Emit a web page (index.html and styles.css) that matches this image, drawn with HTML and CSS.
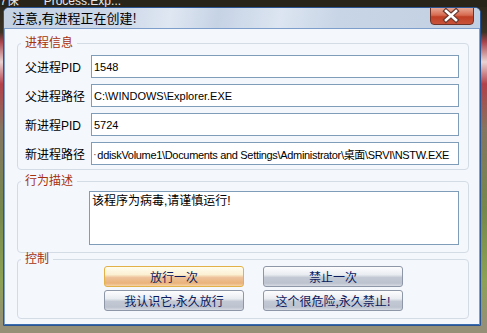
FILE: index.html
```
<!DOCTYPE html>
<html lang="zh-CN">
<head>
    <meta charset="UTF-8">
    <title>注意,有进程正在创建!</title>
    <link rel="stylesheet" href="styles.css">
</head>
<body>
    <div class="desk-top">
        <span class="desk-label">7保</span>
        <span class="desk-label desk-label-wide">Process.Exp...</span>
    </div>
    <div class="window">
        <div class="title-bar">
            <span class="title-text">注意,有进程正在创建!</span>
            <div class="close-btn">
                <svg width="42" height="17" viewBox="0 0 42 17">
                    <path d="M16 4 L26 13 M26 4 L16 13" stroke="#6b3a30" stroke-width="5" stroke-linecap="square" />
                    <path d="M16 4 L26 13 M26 4 L16 13" stroke="#ffffff" stroke-width="2.6" stroke-linecap="square" />
                </svg>
            </div>
        </div>
        <div class="client">
            <fieldset class="group group-info">
                <legend>进程信息</legend>
                <div class="row">
                    <span class="label">父进程PID</span>
                    <div class="field">1548</div>
                </div>
                <div class="row">
                    <span class="label">父进程路径</span>
                    <div class="field">C:\WINDOWS\Explorer.EXE</div>
                </div>
                <div class="row">
                    <span class="label">新进程PID</span>
                    <div class="field">5724</div>
                </div>
                <div class="row">
                    <span class="label">新进程路径</span>
                    <div class="field field-long"><span class="cut-mark">·</span>ddiskVolume1\Documents and Settings\Administrator\桌面\SRVI\NSTW.EXE</div>
                </div>
            </fieldset>
            <fieldset class="group group-desc">
                <legend>行为描述</legend>
                <div class="memo">该程序为病毒,请谨慎运行!</div>
            </fieldset>
            <fieldset class="group group-ctrl">
                <legend>控制</legend>
                <div class="buttons">
                    <button class="btn btn-default">放行一次</button>
                    <button class="btn">禁止一次</button>
                    <button class="btn">我认识它,永久放行</button>
                    <button class="btn">这个很危险,永久禁止!</button>
                </div>
            </fieldset>
        </div>
    </div>
</body>
</html>
```
FILE: styles.css
```
body {
    margin: 0;
    width: 487px;
    height: 333px;
    overflow: hidden;
    font-family: "Liberation Sans", "Noto Sans CJK SC", sans-serif;
    font-size: 12px;
    background: linear-gradient(to bottom, #2a2419 0, #3b3324 32px, #a9454c 42px, #ead2d2 62px, #b4414a 84px, #847660 130px, #76884c 210px, #8da254 280px, #968f78 326px);
}
.desk-top {
    height: 7px;
    overflow: hidden;
    background: #29241a;
    color: #e6e6e6;
    display: flex;
    line-height: 12px;
}
.desk-label {
    margin-top: -5px;
}
.desk-label-wide {
    margin-left: 25px;
}
.window {
    width: 476px;
    height: 317px;
    margin-left: 3px;
    border: 1px solid #2a5592;
    border-radius: 6px 6px 0 0;
    overflow: hidden;
    display: flex;
    flex-direction: column;
    background: #f4f7fc;
}
.title-bar {
    height: 20px;
    display: flex;
    justify-content: space-between;
    align-items: flex-start;
    background: linear-gradient(100deg, #c4d1e3 0%, #cdd8e8 25%, #dfe7f2 35%, #c6d3e5 45%, #dce5f1 58%, #c8d5e6 70%, #c2d0e3 100%);
}
.title-text {
    margin-left: 8px;
    line-height: 20px;
    font-size: 13px;
    color: #000;
    font-family: "Noto Sans CJK SC", sans-serif;
}
.close-btn {
    width: 42px;
    height: 16px;
    margin-top: -1px;
    margin-right: 6px;
    border: 1px solid #6d3328;
    border-radius: 0 0 4px 4px;
    background: linear-gradient(to bottom, #e9a996 0, #d66a50 45%, #bf3f24 55%, #c8533a 100%);
    display: flex;
}
.close-btn svg {
    margin: -1px 0 0 -1px;
}
.client {
    flex: 1;
    border: 1px solid #7d9ecb;
    border-bottom-color: #3a6db0;
    padding: 0 10px 0 12px;
    display: flex;
    flex-direction: column;
}
.group {
    margin: 0;
    border: 1px solid #d3dbe5;
    border-radius: 4px;
    padding: 0 9px 4px 3px;
    min-width: 0;
}
.group legend {
    padding: 0 4px;
    line-height: 12px;
    font-size: 12px;
    color: #a6310e;
}
.group-info {
    margin-top: 8px;
    padding-top: 6px;
    display: flex;
    flex-direction: column;
    gap: 6px;
}
.group-desc {
    margin-top: 5px;
    padding-top: 4px;
    padding-bottom: 7px;
}
.group-ctrl {
    padding-top: 1px;
    padding-bottom: 7px;
}
.row {
    display: grid;
    grid-template-columns: 66px 1fr;
    align-items: center;
    padding-left: 4px;
}
.label {
    color: #000;
}
.field {
    height: 21px;
    border: 1px solid #7f9db9;
    background: #fff;
    padding: 0 3px 0 2px;
    display: flex;
    align-items: center;
    font-size: 11px;
    white-space: nowrap;
    overflow: hidden;
}
.field-long {
    padding-left: 1px;
    letter-spacing: -0.32px;
}
.cut-mark {
    margin-right: 1px;
    color: #555;
}
.memo {
    height: 50px;
    margin-left: 68px;
    border: 1px solid #7f9db9;
    background: #fff;
    padding: 1px 2px;
    line-height: 16px;
}
.buttons {
    display: grid;
    grid-template-columns: 140px 140px;
    column-gap: 19px;
    row-gap: 3px;
    padding-left: 83px;
}
.btn {
    height: 21px;
    margin: 0;
    padding: 0;
    border: 1px solid #8d97a8;
    border-radius: 3px;
    font-family: "Noto Sans CJK SC", sans-serif;
    font-size: 12px;
    color: #0c1a5e;
    background: linear-gradient(to bottom, #fdfdfe 0, #e9ecf1 40%, #c3c9d4 55%, #bcc3cf 85%, #d7dbe2 100%);
}
.btn-default {
    border-color: #e2b148;
    background: linear-gradient(to bottom, #fffdf0 0, #fbf0d2 40%, #eec29a 55%, #eab27a 85%, #f5d3a6 100%);
}
```
